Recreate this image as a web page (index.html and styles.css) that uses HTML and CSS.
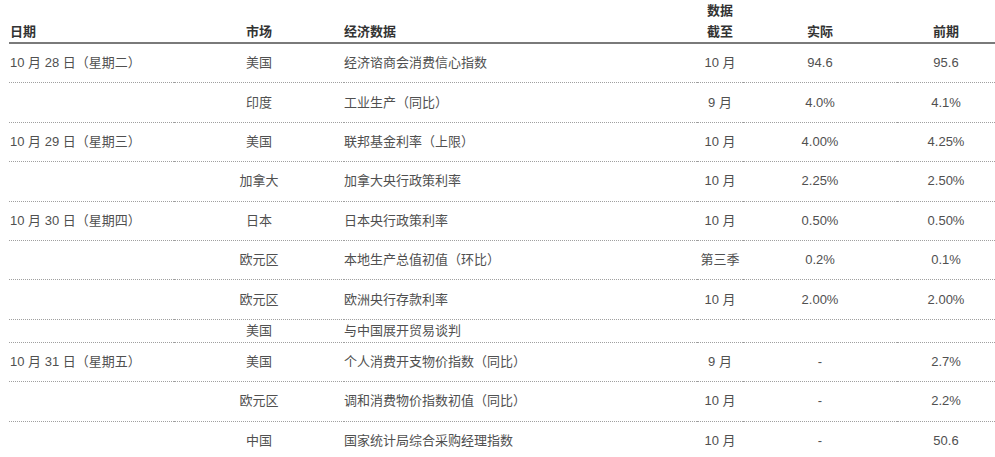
FILE: index.html
```html
<!DOCTYPE html>
<html lang="zh">
<head>
<meta charset="utf-8">
<link rel="stylesheet" href="styles.css">
</head>
<body>
<table class="cal">
  <colgroup>
    <col class="c-date"><col class="c-mkt"><col class="c-data"><col class="c-asof"><col class="c-act"><col class="c-prev">
  </colgroup>
  <thead>
    <tr>
      <th class="l">日期</th>
      <th>市场</th>
      <th class="l">经济数据</th>
      <th>数据<br>截至</th>
      <th>实际</th>
      <th>前期</th>
    </tr>
  </thead>
  <tbody>
    <tr><td class="l">10 月 28 日（星期二）</td><td>美国</td><td class="l">经济谘商会消费信心指数</td><td>10 月</td><td>94.6</td><td>95.6</td></tr>
    <tr><td class="l"></td><td>印度</td><td class="l">工业生产（同比）</td><td>9 月</td><td>4.0%</td><td>4.1%</td></tr>
    <tr><td class="l">10 月 29 日（星期三）</td><td>美国</td><td class="l">联邦基金利率（上限）</td><td>10 月</td><td>4.00%</td><td>4.25%</td></tr>
    <tr><td class="l"></td><td>加拿大</td><td class="l">加拿大央行政策利率</td><td>10 月</td><td>2.25%</td><td>2.50%</td></tr>
    <tr><td class="l">10 月 30 日（星期四）</td><td>日本</td><td class="l">日本央行政策利率</td><td>10 月</td><td>0.50%</td><td>0.50%</td></tr>
    <tr><td class="l"></td><td>欧元区</td><td class="l">本地生产总值初值（环比）</td><td>第三季</td><td>0.2%</td><td>0.1%</td></tr>
    <tr><td class="l"></td><td>欧元区</td><td class="l">欧洲央行存款利率</td><td>10 月</td><td>2.00%</td><td>2.00%</td></tr>
    <tr class="tight"><td class="l"></td><td>美国</td><td class="l">与中国展开贸易谈判</td><td></td><td></td><td></td></tr>
    <tr><td class="l">10 月 31 日（星期五）</td><td>美国</td><td class="l">个人消费开支物价指数（同比）</td><td>9 月</td><td>-</td><td>2.7%</td></tr>
    <tr><td class="l"></td><td>欧元区</td><td class="l">调和消费物价指数初值（同比）</td><td>10 月</td><td>-</td><td>2.2%</td></tr>
    <tr class="last"><td class="l"></td><td>中国</td><td class="l">国家统计局综合采购经理指数</td><td>10 月</td><td>-</td><td>50.6</td></tr>
  </tbody>
</table>
</body>
</html>
```

FILE: styles.css
```css
html, body {
  margin: 0;
  padding: 0;
  background: #ffffff;
  overflow: hidden;
}

body {
  font-family: "Liberation Sans", "Noto Sans CJK SC", sans-serif;
  font-size: 13px;
  color: #505050;
}

.cal {
  margin-left: 9px;
  width: 986px;
  table-layout: fixed;
  border-collapse: collapse;
}

.c-date { width: 165px; }
.c-mkt { width: 170px; }
.c-data { width: 353px; }
.c-asof { width: 46px; }
.c-act { width: 154px; }
.c-prev { width: 98px; }

.cal th {
  font-weight: bold;
  color: #333333;
  line-height: 21px;
  padding: 0;
  vertical-align: bottom;
  text-align: center;
  border-bottom: 2px solid #7a7a7a;
  white-space: nowrap;
}

.cal td {
  height: 38.4px;
  padding: 0;
  line-height: 20px;
  text-align: center;
  vertical-align: middle;
  border-bottom: 1px dotted #a0a0a0;
  white-space: nowrap;
}

.cal th.l, .cal td.l {
  text-align: left;
}

.cal td.l:first-child, .cal th.l:first-child {
  padding-left: 1px;
}

.cal tr.tight td {
  height: 22px;
  line-height: 22px;
}

.cal tr.last td {
  border-bottom: none;
}
```
